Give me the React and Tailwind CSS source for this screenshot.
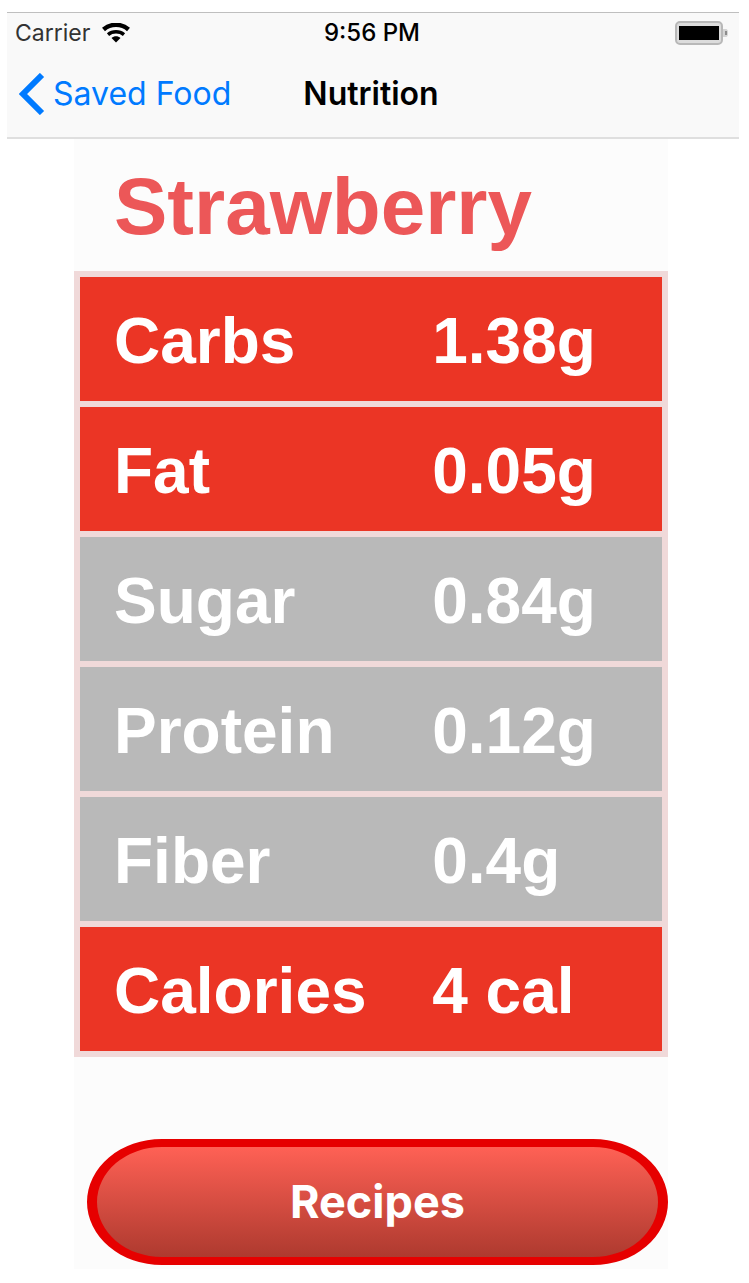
const nutrients = [
  { name: 'Carbs', value: '1.38g', tone: 'bg-[#eb3525]' },
  { name: 'Fat', value: '0.05g', tone: 'bg-[#eb3525]' },
  { name: 'Sugar', value: '0.84g', tone: 'bg-[#b9b9b9]' },
  { name: 'Protein', value: '0.12g', tone: 'bg-[#b9b9b9]' },
  { name: 'Fiber', value: '0.4g', tone: 'bg-[#b9b9b9]' },
  { name: 'Calories', value: '4 cal', tone: 'bg-[#eb3525]' },
];

function WifiIcon() {
  return (
    <svg className="h-5 w-7" viewBox="0 0 28 20" aria-hidden="true">
      <g fill="none" stroke="#000">
        <path d="M1.5 6.5C8.5 .2 19.5 .2 26.5 6.5" strokeWidth="4.4" />
        <path d="M6 11.6C10.5 7.8 17.5 7.8 22 11.6" strokeWidth="3.4" />
      </g>
      <path d="M9.5 15C12 12.8 16 12.8 18.5 15L14 19.5Z" />
    </svg>
  );
}

function BatteryIcon() {
  return (
    <svg className="h-6 w-[54px]" viewBox="0 0 54 24" aria-hidden="true">
      <rect x="1" y="1" width="46" height="22" rx="4" fill="#dcdcdc" stroke="#b8b8b8" strokeWidth="2" />
      <rect x="4" y="5" width="40" height="14" fill="#000" />
      <path d="M48 8h3q2 0 2 4t-2 4H48Z" fill="#d4d4d4" />
      <rect x="50" y="10" width="2" height="4" fill="#8c8c8c" />
    </svg>
  );
}

function StatusBar() {
  return (
    <div className="grid grid-cols-3 items-center pt-1 pr-[10px] pl-2 leading-8">
      <div className="flex items-center gap-3 text-[23px] text-[#333]">
        <span>Carrier</span>
        <WifiIcon />
      </div>
      <div className="text-center text-2xl leading-8 font-medium text-black">9:56 PM</div>
      <div className="flex justify-end">
        <BatteryIcon />
      </div>
    </div>
  );
}

function NavigationBar() {
  return (
    <nav className="grid grid-cols-[1fr_auto_1fr] items-center pt-[22px] pr-4 pb-5 pl-3 text-[32px] leading-[46px]">
      <a href="#saved" className="flex items-center gap-2 text-[#007aff]">
        <svg className="h-[42px] w-[26px]" viewBox="0 0 26 42" fill="none" aria-hidden="true">
          <path d="M23 2L4 21L23 40" stroke="currentColor" strokeWidth="6" />
        </svg>
        Saved Food
      </a>
      <h1 className="font-semibold text-black">Nutrition</h1>
    </nav>
  );
}

export default function App() {
  return (
    <div className="min-h-screen bg-white pt-3 pr-[10px] pb-3 pl-[7px]">
      <header className="border-t border-b-2 border-t-[#bfbfbf] border-b-[#dfdfdf] bg-[#f9f9f9] font-[Inter,sans-serif]">
        <StatusBar />
        <NavigationBar />
      </header>
      <main className="mr-[71px] ml-[67px] bg-[#fcfcfc] pt-7 pb-1 font-['Liberation_Sans',Arial,sans-serif]">
        <h2 className="pb-6 pl-10 text-[80px] leading-[80px] font-bold text-[#ec5758]">Strawberry</h2>
        <table className="w-full table-fixed border-separate border-spacing-0 border-x-6 border-t-6 border-[#f0d9d9] text-left text-[64px] leading-[64px] text-white">
          <tbody>
            {nutrients.map(({ name, value, tone }) => (
              <tr key={name} className={tone}>
                <th scope="row" className="w-[60%] border-b-6 border-[#f0d9d9] pt-8 pb-7 pl-[34px] font-bold">{name}</th>
                <td className="border-b-6 border-[#f0d9d9] pt-8 pb-7 pl-[3px] font-bold whitespace-nowrap">{value}</td>
              </tr>
            ))}
          </tbody>
        </table>
        <div className="pt-[82px] pl-[13px]">
          <button
            type="button"
            className="w-full rounded-[76px/64px] border-x-10 border-y-8 border-[#e60000] bg-linear-to-b from-[#ff6155] to-[#ae3a2f] bg-origin-padding py-7 font-[Inter,sans-serif] text-[45px] leading-[54px] font-bold text-white"
          >
            Recipes
          </button>
        </div>
      </main>
    </div>
  );
}
